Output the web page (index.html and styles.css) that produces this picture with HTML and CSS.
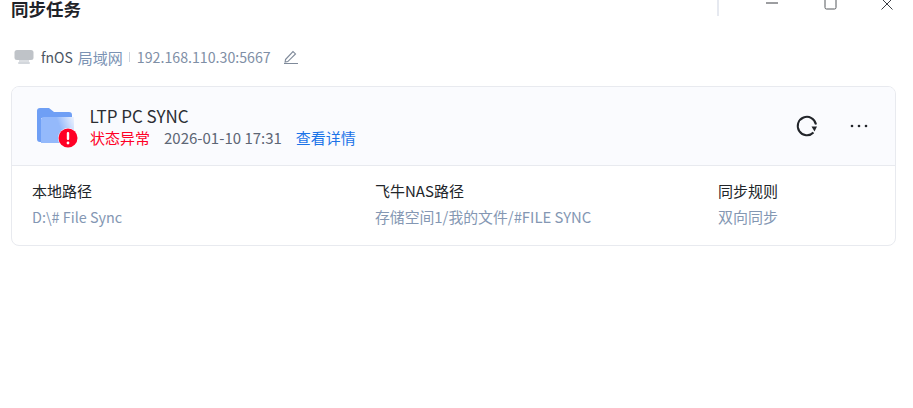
FILE: index.html
```html
<!DOCTYPE html>
<html lang="zh-CN">
<head>
    <meta charset="UTF-8">
    <title>同步任务</title>
    <link rel="stylesheet" href="styles.css">
</head>
<body>
    <div class="titlebar">
        <h1 class="title">同步任务</h1>
        <div class="win-controls">
            <span class="win-divider"></span>
            <svg class="win-min" width="14" height="6" viewBox="0 0 14 6"><path d="M1 3h12" stroke="#3a3d42" fill="none"/></svg>
            <svg class="win-max" width="14" height="12" viewBox="0 0 14 12"><path d="M2 0v7.500a1.500 1.500 0 0 0 1.500 1.500h8a1.500 1.500 0 0 0 1.500-1.500V0" stroke="#55585c" fill="none"/></svg>
            <svg class="win-close" width="14" height="12" viewBox="0 0 14 12"><path d="M1.500-1.500l11 11M12.500-1.500l-11 11" stroke="#3a3d42" fill="none"/></svg>
        </div>
    </div>

    <div class="device">
        <svg class="device-icon" width="20" height="16" viewBox="0 0 20 16">
            <rect x="0.500" y="1" width="19" height="10" rx="2.500" fill="#bfc3c8"/>
            <rect x="5" y="11" width="10" height="2" fill="#dcdfe3"/>
            <rect x="4" y="13" width="12" height="2" rx="1" fill="#d3d7dc"/>
        </svg>
        <span class="device-name">fnOS</span>
        <span class="device-net">局域网</span>
        <span class="device-sep"></span>
        <span class="device-addr">192.168.110.30:5667</span>
        <svg class="edit-icon" width="16" height="16" viewBox="0 0 16 16">
            <path d="M2.500 10.500l7.500-8 2.500 2.400-7.700 7.700-2.700.4z M1 14.500h14" stroke="#7f8a9a" stroke-width="1.100" fill="none"/>
        </svg>
    </div>

    <div class="card">
        <div class="card-head">
            <div class="folder">
                <svg width="42" height="42" viewBox="0 0 42 42">
                    <defs>
                        <linearGradient id="fade" x1="0" x2="1" y1="0.300" y2="0">
                            <stop offset="0.500" stop-color="#94b9fb"/>
                            <stop offset="1" stop-color="#eef3fe"/>
                        </linearGradient>
                    </defs>
                    <path d="M1 5a3 3 0 0 1 3-3h9l5 4h15a3 3 0 0 1 3 3v3H5v24H4a3 3 0 0 1-3-3z" fill="#6f9ff5"/>
                    <path d="M5 14a3 3 0 0 1 3-3h30v23a3 3 0 0 1-3 3H5z" fill="url(#fade)"/>
                    <circle cx="32" cy="32" r="10" fill="#fafbfe"/>
                    <circle cx="32" cy="32" r="9.500" fill="#ff0026"/>
                    <rect x="30.800" y="26" width="2.400" height="8" rx="1.100" fill="#fff"/>
                    <circle cx="32" cy="37" r="1.400" fill="#fff"/>
                </svg>
            </div>
            <div class="task">
                <div class="task-name">LTP PC SYNC</div>
                <div class="task-meta">
                    <span class="status">状态异常</span>
                    <span class="time">2026-01-10 17:31</span>
                    <a class="detail">查看详情</a>
                </div>
            </div>
            <div class="actions">
                <svg width="24" height="24" viewBox="0 0 24 24">
                    <path d="M18.500 18.500A9.200 9.200 0 1 1 21 10.500" stroke="#22252a" stroke-width="2" fill="none"/>
                    <path d="M16.500 12.500h5.500l-2.500 5z" fill="#22252a"/>
                </svg>
                <svg width="20" height="6" viewBox="0 0 20 6">
                    <circle cx="3" cy="3" r="1.300" fill="#22252a"/>
                    <circle cx="10" cy="3" r="1.300" fill="#22252a"/>
                    <circle cx="17" cy="3" r="1.300" fill="#22252a"/>
                </svg>
            </div>
        </div>
        <div class="card-body">
            <div class="col col-local">
                <div class="col-label">本地路径</div>
                <div class="col-value">D:\# File Sync</div>
            </div>
            <div class="col col-nas">
                <div class="col-label">飞牛NAS路径</div>
                <div class="col-value">存储空间1/我的文件/#FILE SYNC</div>
            </div>
            <div class="col">
                <div class="col-label">同步规则</div>
                <div class="col-value">双向同步</div>
            </div>
        </div>
    </div>
</body>
</html>
```

FILE: styles.css
```css
* { box-sizing: border-box; }
body { margin: 0; height: 408px; overflow: hidden; background: #fff; font-family: "Noto Sans CJK SC", "Noto Sans", sans-serif; font-size: 15px; color: #22252a; }

.titlebar { display: flex; justify-content: space-between; height: 18px; padding-left: 11px; }
.title { margin: 0; font-size: 17.5px; line-height: 18px; font-weight: 700; color: #1f2329; }
.win-controls { display: flex; align-items: flex-start; }
.win-divider { width: 2px; height: 16px; background: #e6e9f0; margin-right: 46px; }
.win-min { margin-right: 44px; }
.win-max { margin-right: 43px; }
.win-close { margin-right: 19px; }

.device { display: flex; align-items: center; height: 24px; margin-top: 27px; padding-left: 14px; font-size: 15px; }
.device-icon { margin-right: 7px; }
.device-name { color: #4c5663; font-size: 14px; margin-right: 5px; }
.device-net { color: #7b93b4; }
.device-sep { width: 1px; height: 10px; background: #cdd5e0; margin: 0 7px 0 6px; }
.device-addr { color: #7f8fa6; font-size: 14.2px; }
.edit-icon { margin-left: 12px; }

.card { margin: 17px 17px 0 11px; height: 160px; border: 1px solid #e8eaef; border-radius: 8px; overflow: hidden; }
.card-head { display: flex; align-items: center; height: 79px; background: #fafbfe; border-bottom: 1px solid #e8eaef; padding-left: 24px; padding-right: 26px; }
.folder { width: 42px; height: 42px; margin-top: 2px; }
.task { flex: 1; margin-left: 12px; }
.task-name { font-size: 17px; line-height: 22px; margin-top: 1px; margin-left: -0.5px; color: #2b2e33; }
.task-meta { display: flex; font-size: 15px; line-height: 22px; }
.status { color: #ff0026; margin-right: 14px; }
.time { color: #5d6675; margin-right: 14px; }
.detail { color: #1a73e8; }
.actions { display: flex; align-items: center; gap: 30px; }

.card-body { display: flex; padding: 14px 20px 0; }
.col-local { width: 343px; }
.col-nas { width: 343px; }
.col-label { font-size: 15px; line-height: 22px; color: #22252a; }
.col-value { font-size: 15px; line-height: 22px; margin-top: 4px; color: #8497b3; }
.col-local .col-value { font-size: 14.4px; }
.col-nas .col-value { font-size: 14.85px; }
```
